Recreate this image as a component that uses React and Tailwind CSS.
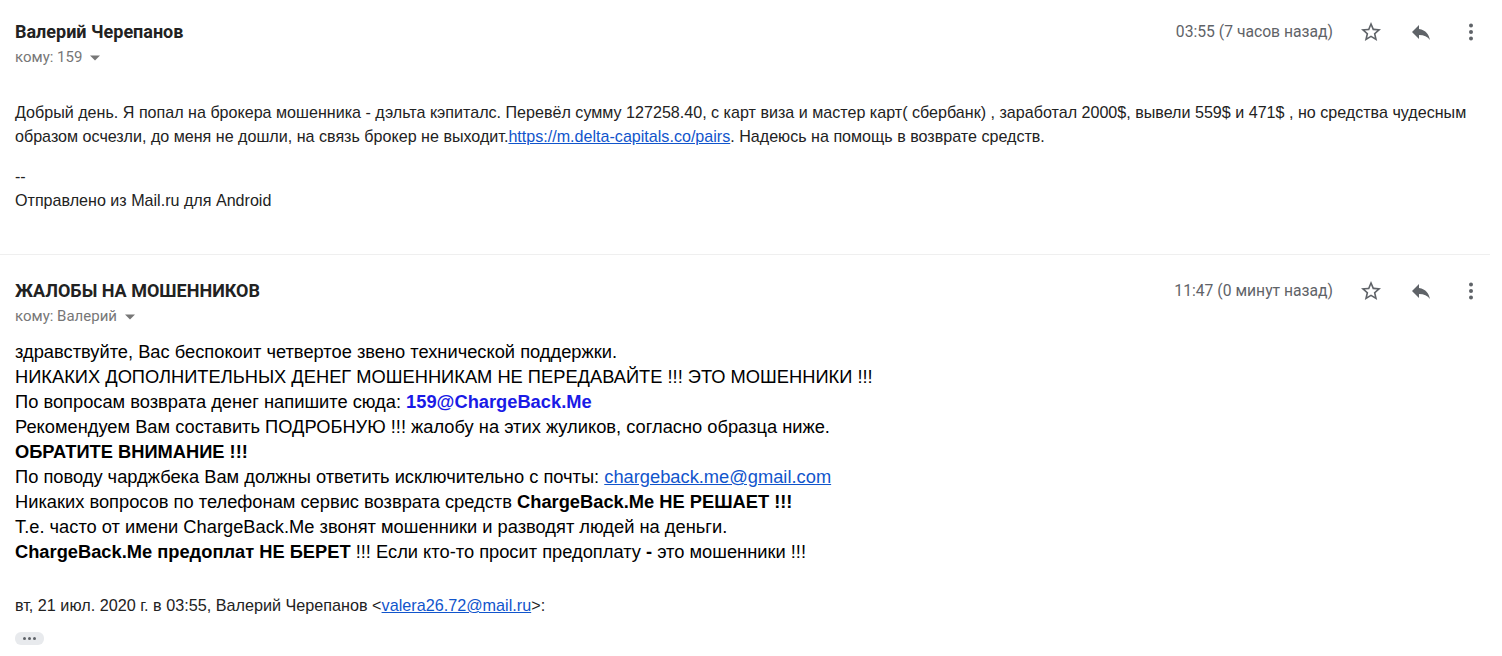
import React from 'react';

const Star = () => (
  <svg width="24" height="24" viewBox="0 0 24 24" fill="#5f6368">
    <path d="M22 9.24l-7.19-.62L12 2 9.19 8.63 2 9.24l5.46 4.73L5.82 21 12 17.27 18.18 21l-1.63-7.03L22 9.24zM12 15.4l-3.76 2.27 1-4.28-3.32-2.88 4.38-.38L12 6.1l1.71 4.04 4.38.38-3.32 2.88 1 4.28L12 15.4z" />
  </svg>
);

const Reply = () => (
  <svg width="24" height="24" viewBox="0 0 24 24" fill="#5f6368">
    <path d="M10 9V5l-7 7 7 7v-4.1c5 0 8.5 1.6 11 5.1-1-5-4-10-11-11z" />
  </svg>
);

const More = () => (
  <svg width="24" height="24" viewBox="0 0 24 24" fill="#5f6368">
    <circle cx="12" cy="5.5" r="2" />
    <circle cx="12" cy="12" r="2" />
    <circle cx="12" cy="18.5" r="2" />
  </svg>
);

const Caret = () => (
  <svg width="10" height="6" viewBox="0 0 10 5" className="ml-[8px] mt-[2px]" fill="#777">
    <path d="M0 0l5 5 5-5z" />
  </svg>
);

const Header = ({ name, to, time }) => (
  <div className="flex items-start justify-between">
    <div className="font-['Roboto',sans-serif]">
      <div className="text-[18px] font-bold text-[#222] leading-5">{name}</div>
      <div className="flex items-center text-[15px] text-[#777] leading-5 mt-[5px]">
        кому: {to}
        <Caret />
      </div>
    </div>
    <div className="flex items-center font-['Roboto',sans-serif] text-[15.7px] text-[#5f6368] -mt-[2px]">
      <span className="mr-[26px]">{time}</span>
      <div className="flex items-center gap-[26px] pr-[4px]">
        <Star />
        <Reply />
        <More />
      </div>
    </div>
  </div>
);

export default function App() {
  return (
    <div className="w-[1502px] h-[656px] bg-white overflow-hidden text-[#222]">
      <div className="px-[15px] pt-[22px]">
        <Header name="Валерий Черепанов" to="159" time="03:55 (7 часов назад)" />
        <div className="mt-[33px] -mr-[10px] font-['Liberation_Sans',Arial,sans-serif] text-[16.1px] leading-6 text-[#222]">
          <p>
            Добрый день. Я попал на брокера мошенника - дэльта кэпиталс. Перевёл сумму 127258.40, с карт виза и мастер карт( сбербанк) , заработал 2000$, вывели 559$ и 471$ , но средства чудесным образом осчезли, до меня не дошли, на связь брокер не выходит.<a className="text-[#1155cc] underline">https://m.delta-capitals.co/pairs</a>. Надеюсь на помощь в возврате средств.
          </p>
          <p className="mt-[16px]">--</p>
          <p>Отправлено из Mail.ru для Android</p>
        </div>
      </div>

      <div className="mt-[42px] border-t border-[#efefef] mr-[12px]" />

      <div className="px-[15px] pt-[26px]">
        <Header name="ЖАЛОБЫ НА МОШЕННИКОВ" to="Валерий" time="11:47 (0 минут назад)" />
        <div className="mt-[13px] font-['Liberation_Sans',Arial,sans-serif] text-[18.3px] leading-[25px] text-black">
          <p>здравствуйте, Вас беспокоит четвертое звено технической поддержки.</p>
          <p>НИКАКИХ ДОПОЛНИТЕЛЬНЫХ ДЕНЕГ МОШЕННИКАМ НЕ ПЕРЕДАВАЙТЕ !!! ЭТО МОШЕННИКИ !!!</p>
          <p>
            По вопросам возврата денег напишите сюда: <b className="text-[#1a1ae6]">159@ChargeBack.Me</b>
          </p>
          <p>Рекомендуем Вам составить ПОДРОБНУЮ !!! жалобу на этих жуликов, согласно образца ниже.</p>
          <p className="font-bold">ОБРАТИТЕ ВНИМАНИЕ !!!</p>
          <p>
            По поводу чарджбека Вам должны ответить исключительно с почты: <a className="text-[#1155cc] underline">chargeback.me@gmail.com</a>
          </p>
          <p>
            Никаких вопросов по телефонам сервис возврата средств <b>ChargeBack.Me НЕ РЕШАЕТ !!!</b>
          </p>
          <p>Т.е. часто от имени ChargeBack.Me звонят мошенники и разводят людей на деньги.</p>
          <p>
            <b>ChargeBack.Me предоплат НЕ БЕРЕТ</b> !!! Если кто-то просит предоплату <b>-</b> это мошенники !!!
          </p>
        </div>
        <div className="mt-[29px] font-['Liberation_Sans',Arial,sans-serif] text-[16.2px] leading-6 text-[#222]">
          вт, 21 июл. 2020 г. в 03:55, Валерий Черепанов &lt;<a className="text-[#1155cc] underline">valera26.72@mail.ru</a>&gt;:
        </div>
        <div className="mt-[15px] w-[29px] h-[13px] rounded-[6px] bg-[#e8eaed] flex items-center justify-center gap-[2px]">
          <span className="w-[3px] h-[3px] rounded-full bg-[#5f6368]" />
          <span className="w-[3px] h-[3px] rounded-full bg-[#5f6368]" />
          <span className="w-[3px] h-[3px] rounded-full bg-[#5f6368]" />
        </div>
      </div>
    </div>
  );
}
